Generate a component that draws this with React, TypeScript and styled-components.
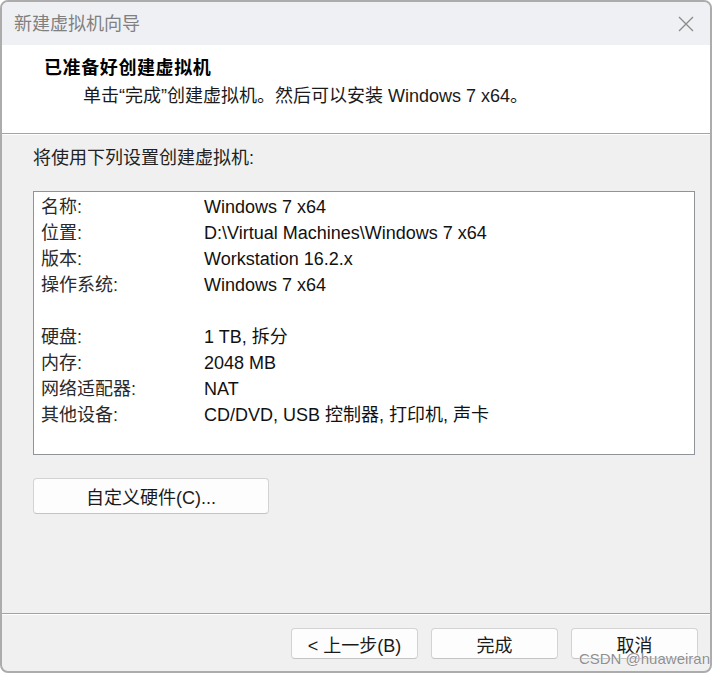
import React from "react";
import styled, { createGlobalStyle } from "styled-components";

const Global = createGlobalStyle`
  html, body { margin: 0; padding: 0; background: #ffffff; }
  body { font-family: "Liberation Sans", "Noto Sans CJK SC", sans-serif; }
  * { box-sizing: border-box; }
`;

const Page = styled.div`
  position: relative;
  width: 714px;
  height: 674px;
  overflow: hidden;
`;

const Window = styled.div`
  width: 712px;
  height: 673px;
  border: 2px solid #acacac;
  border-radius: 8px;
  overflow: hidden;
  display: flex;
  flex-direction: column;
  background: #f0f0f0;
  font-family: "Liberation Sans", "Noto Sans CJK SC", sans-serif;
  font-size: 18px;
  color: #1c1c1c;
`;

const TitleBar = styled.div`
  height: 43px;
  flex: none;
  background: #eff0f4;
  display: flex;
  align-items: center;
  justify-content: space-between;
  padding: 0 15px 0 12px;
`;

const TitleText = styled.span`
  font-size: 18px;
  line-height: 26px;
  color: #808080;
`;

const CloseButton = styled.div`
  width: 18px;
  height: 18px;
  display: flex;
  align-items: center;
  justify-content: center;
`;

const Header = styled.div`
  height: 88px;
  flex: none;
  background: #ffffff;
  padding: 10px 0 0 42px;
  display: flex;
  flex-direction: column;
  gap: 2px;
`;

const HeaderTitle = styled.div`
  font-weight: bold;
  line-height: 26px;
  letter-spacing: 0.6px;
  color: #000;
`;

const HeaderSub = styled.div`
  line-height: 26px;
  padding-left: 39px;
  color: #1a1a1a;
`;

const Etched = styled.div`
  height: 2px;
  flex: none;
  border-top: 1px solid #a3a3a3;
  border-bottom: 1px solid #ffffff;
`;

const Content = styled.div`
  flex: 1;
  padding: 10px 15px 0 31px;
  display: flex;
  flex-direction: column;
`;

const Intro = styled.div`
  line-height: 26px;
  color: #222;
`;

const SummaryBox = styled.div`
  margin-top: 20px;
  height: 264px;
  background: #ffffff;
  border: 1px solid #8e9499;
  padding: 2px 7px;
`;

const Row = styled.div`
  display: grid;
  grid-template-columns: 163px 1fr;
  height: 26px;
  line-height: 26px;
`;

const Label = styled.span`
  color: #2a2a2a;
`;

const Value = styled.span`
  color: #111;
  white-space: nowrap;
`;

const Button = styled.button<{ $w: number; $h: number }>`
  width: ${(p) => p.$w}px;
  height: ${(p) => p.$h}px;
  background: #fdfdfd;
  border: 1px solid #d3d3d3;
  border-bottom-color: #c4c4c4;
  border-radius: 4px;
  font-family: "Liberation Sans", "Noto Sans CJK SC", sans-serif;
  font-size: 18px;
  color: #1a1a1a;
  padding: 0;
  display: flex;
  align-items: center;
  justify-content: center;
`;

const CustomWrap = styled.div`
  margin-top: 23px;
`;

const Footer = styled.div`
  height: 56px;
  flex: none;
  display: flex;
  justify-content: flex-end;
  align-items: flex-start;
  gap: 13px;
  padding: 13px 12px 0 0;
`;

const Watermark = styled.div`
  position: absolute;
  right: 4px;
  bottom: 6px;
  font-family: "Liberation Sans", sans-serif;
  font-size: 15px;
  line-height: 18px;
  color: #8f8f8f;
  text-shadow: 0 0 1px #fff, 0 0 1px #fff;
`;

const rows: Array<[string, string] | null> = [
  ["名称:", "Windows 7 x64"],
  ["位置:", "D:\\Virtual Machines\\Windows 7 x64"],
  ["版本:", "Workstation 16.2.x"],
  ["操作系统:", "Windows 7 x64"],
  null,
  ["硬盘:", "1 TB, 拆分"],
  ["内存:", "2048 MB"],
  ["网络适配器:", "NAT"],
  ["其他设备:", "CD/DVD, USB 控制器, 打印机, 声卡"],
];

export default function App() {
  return (
    <Page>
      <Global />
      <Window>
        <TitleBar>
          <TitleText>新建虚拟机向导</TitleText>
          <CloseButton>
            <svg width="16" height="16" viewBox="0 0 16 16">
              <path d="M1 1 L15 15 M15 1 L1 15" stroke="#8a8a8a" strokeWidth="1.3" fill="none" />
            </svg>
          </CloseButton>
        </TitleBar>
        <Header>
          <HeaderTitle>已准备好创建虚拟机</HeaderTitle>
          <HeaderSub>单击“完成”创建虚拟机。然后可以安装 Windows 7 x64。</HeaderSub>
        </Header>
        <Etched />
        <Content>
          <Intro>将使用下列设置创建虚拟机:</Intro>
          <SummaryBox>
            {rows.map((r, i) =>
              r ? (
                <Row key={i}>
                  <Label>{r[0]}</Label>
                  <Value>{r[1]}</Value>
                </Row>
              ) : (
                <Row key={i} />
              )
            )}
          </SummaryBox>
          <CustomWrap>
            <Button $w={236} $h={36}>自定义硬件(C)...</Button>
          </CustomWrap>
        </Content>
        <Etched />
        <Footer>
          <Button $w={127} $h={31}>&lt; 上一步(B)</Button>
          <Button $w={127} $h={31}>完成</Button>
          <Button $w={127} $h={31}>取消</Button>
        </Footer>
      </Window>
      <Watermark>CSDN @huaweiran</Watermark>
    </Page>
  );
}
